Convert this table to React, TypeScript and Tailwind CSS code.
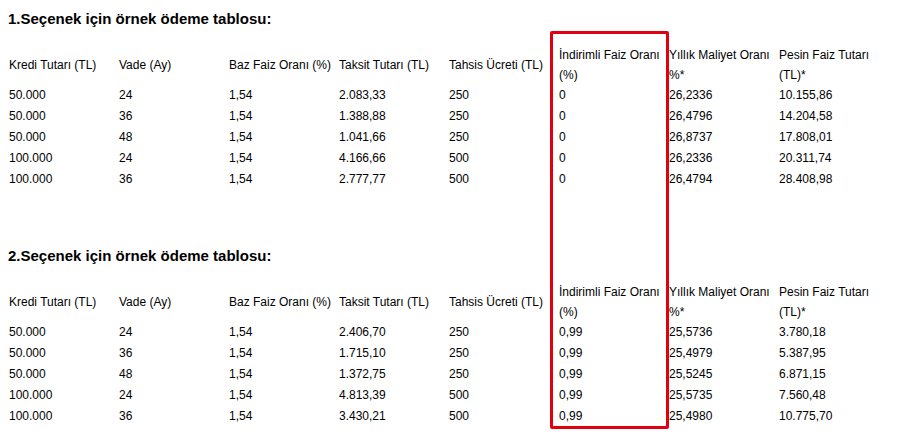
import React from "react";

const headers = [
  "Kredi Tutarı (TL)",
  "Vade (Ay)",
  "Baz Faiz Oranı (%)",
  "Taksit Tutarı (TL)",
  "Tahsis Ücreti (TL)",
  "İndirimli Faiz Oranı (%)",
  "Yıllık Maliyet Oranı %*",
  "Pesin Faiz Tutarı (TL)*",
];

const table1 = [
  ["50.000", "24", "1,54", "2.083,33", "250", "0", "26,2336", "10.155,86"],
  ["50.000", "36", "1,54", "1.388,88", "250", "0", "26,4796", "14.204,58"],
  ["50.000", "48", "1,54", "1.041,66", "250", "0", "26,8737", "17.808,01"],
  ["100.000", "24", "1,54", "4.166,66", "500", "0", "26,2336", "20.311,74"],
  ["100.000", "36", "1,54", "2.777,77", "500", "0", "26,4794", "28.408,98"],
];

const table2 = [
  ["50.000", "24", "1,54", "2.406,70", "250", "0,99", "25,5736", "3.780,18"],
  ["50.000", "36", "1,54", "1.715,10", "250", "0,99", "25,4979", "5.387,95"],
  ["50.000", "48", "1,54", "1.372,75", "250", "0,99", "25,5245", "6.871,15"],
  ["100.000", "24", "1,54", "4.813,39", "500", "0,99", "25,5735", "7.560,48"],
  ["100.000", "36", "1,54", "3.430,21", "500", "0,99", "25,4980", "10.775,70"],
];

function PaymentTable({ title, rows }: { title: string; rows: string[][] }) {
  return (
    <div>
      <h2 className="text-[15px] font-bold leading-[21px]">{title}</h2>
      <table className="mt-[14px] table-fixed border-collapse">
        <colgroup>
          {headers.map((h) => (
            <col key={h} className="w-[110px]" />
          ))}
        </colgroup>
        <thead>
          <tr>
            {headers.map((h) => (
              <th key={h} className="px-[1px] pt-[2px] text-left align-middle font-normal leading-[20px] h-[42px]">
                {h}
              </th>
            ))}
          </tr>
        </thead>
        <tbody>
          {rows.map((row, i) => (
            <tr key={i}>
              {row.map((cell, j) => (
                <td key={j} className="px-[1px] leading-[21px] h-[21px]">
                  {cell}
                </td>
              ))}
            </tr>
          ))}
        </tbody>
      </table>
    </div>
  );
}

export default function App() {
  return (
    <div className="relative w-[900px] h-[441px] bg-white text-black text-[12px] font-['Liberation_Sans',Arial,sans-serif] pl-[8px] pt-[8px] overflow-hidden">
      <div className="flex flex-col gap-[55px]">
        <PaymentTable title="1.Seçenek için örnek ödeme tablosu:" rows={table1} />
        <PaymentTable title="2.Seçenek için örnek ödeme tablosu:" rows={table2} />
      </div>
      <div className="absolute left-[550px] top-[31px] w-[119px] h-[398px] border-[3px] border-[#e2000f] rounded-[2px]" />
    </div>
  );
}
